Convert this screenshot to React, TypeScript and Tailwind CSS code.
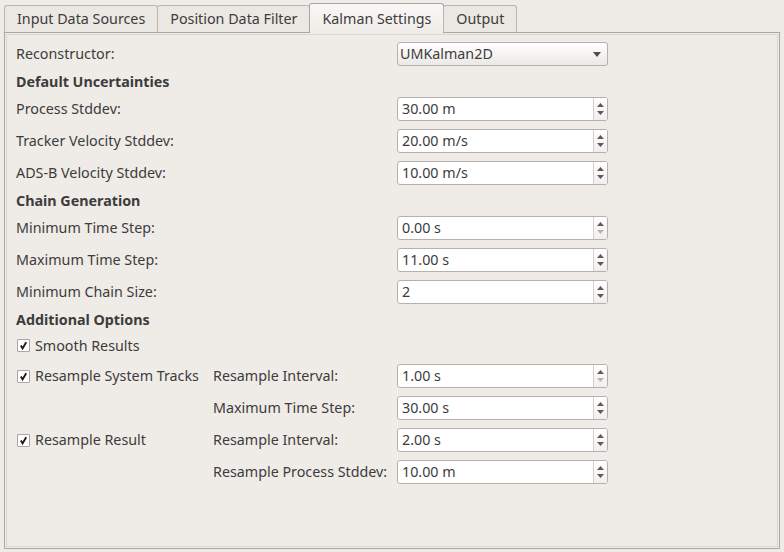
import React from 'react';

const font = { fontFamily: '"Noto Sans", "Open Sans", sans-serif' };

function Arrow({ dir, dim }: { dir: 'up' | 'down'; dim?: boolean }) {
  return (
    <svg width="7" height="4" viewBox="0 0 7 4" className="block">
      {dir === 'up' ? (
        <polygon points="0,4 3.5,0 7,4" fill={dim ? '#b8b4b0' : '#5d5a57'} />
      ) : (
        <polygon points="0,0 3.5,4 7,0" fill={dim ? '#b8b4b0' : '#5d5a57'} />
      )}
    </svg>
  );
}

function SpinBox({ value, downDim }: { value: string; downDim?: boolean }) {
  return (
    <div className="w-[211px] h-[24px] flex bg-white border border-[#b6b1ac] rounded-[3px] overflow-hidden">
      <div className="flex-1 flex items-center pl-[4px] text-[#3c3c3c]">{value}</div>
      <div className="w-[14px] border-l border-[#d4d0cc] bg-gradient-to-b from-white to-[#f1efed] flex flex-col items-center justify-center gap-[4px]">
        <Arrow dir="up" />
        <Arrow dir="down" dim={downDim} />
      </div>
    </div>
  );
}

function Combo({ value }: { value: string }) {
  return (
    <div className="w-[211px] h-[24px] flex items-center justify-between bg-gradient-to-b from-white to-[#ebe9e6] border border-[#b6b1ac] rounded-[3px] pl-[2px] pr-[6px] text-[#3c3c3c]">
      <span>{value}</span>
      <svg width="8" height="5" viewBox="0 0 8 5">
        <polygon points="0,0 4,5 8,0" fill="#4e4b48" />
      </svg>
    </div>
  );
}

function Row({ label, children }: { label: string; children: React.ReactNode }) {
  return (
    <div className="h-[32px] flex items-center">
      <div className="w-[381px]">{label}</div>
      {children}
    </div>
  );
}

function Header({ text }: { text: string }) {
  return <div className="h-[23px] flex items-center font-bold">{text}</div>;
}

function Check({ label }: { label: string }) {
  return (
    <div className="flex items-center">
      <div className="w-[13px] h-[13px] ml-[1px] mr-[5px] bg-white border border-[#a9a5a1] rounded-[1px] flex items-center justify-center">
        <svg width="9" height="9" viewBox="0 0 9 9">
          <path d="M1.8 4.6 L3.6 7.4 L7.2 1.2" stroke="#1e1c1a" strokeWidth="1.9" fill="none" />
        </svg>
      </div>
      <span>{label}</span>
    </div>
  );
}

export default function App() {
  const tabs = ['Input Data Sources', 'Position Data Filter', 'Kalman Settings', 'Output'];
  return (
    <div className="w-[784px] h-[552px] bg-[#efebe7] text-[14.3px] text-[#3c3c3c] flex flex-col px-[4px] pb-[3px]" style={font}>
      {/* tabs */}
      <div className="flex items-end h-[32px] pt-[3px] relative z-10">
        {tabs.map((t, i) =>
          i === 2 ? (
            <div
              key={t}
              className="h-[30px] px-[12px] flex items-center border border-b-0 border-[#aaa6a1] rounded-t-[3px] bg-gradient-to-b from-[#f9f8f7] to-[#efebe7] -mb-px -ml-px"
            >
              {t}
            </div>
          ) : (
            <div
              key={t}
              className={`h-[27px] px-[12px] flex items-center border border-b-0 border-[#b9b5b0] rounded-t-[3px] bg-[#ebe7e3] ${i > 0 ? '-ml-px' : ''}`}
            >
              {t}
            </div>
          )
        )}
      </div>
      {/* panel */}
      <div className="flex-1 border border-[#aaa6a1] p-px">
        <div className="h-full border border-[#dcd8d3] px-[9px] pt-[3px]">
          <Row label="Reconstructor:">
            <Combo value="UMKalman2D" />
          </Row>
          <Header text="Default Uncertainties" />
          <Row label="Process Stddev:">
            <SpinBox value="30.00 m" />
          </Row>
          <Row label="Tracker Velocity Stddev:">
            <SpinBox value="20.00 m/s" />
          </Row>
          <Row label="ADS-B Velocity Stddev:">
            <SpinBox value="10.00 m/s" />
          </Row>
          <Header text="Chain Generation" />
          <Row label="Minimum Time Step:">
            <SpinBox value="0.00 s" downDim />
          </Row>
          <Row label="Maximum Time Step:">
            <SpinBox value="11.00 s" />
          </Row>
          <Row label="Minimum Chain Size:">
            <SpinBox value="2" />
          </Row>
          <Header text="Additional Options" />
          <div className="h-[29px] flex items-center">
            <Check label="Smooth Results" />
          </div>
          <div className="grid grid-cols-[197px_184px_211px] auto-rows-[32px] items-center">
            <Check label="Resample System Tracks" />
            <div>Resample Interval:</div>
            <SpinBox value="1.00 s" downDim />
            <div />
            <div>Maximum Time Step:</div>
            <SpinBox value="30.00 s" />
            <Check label="Resample Result" />
            <div>Resample Interval:</div>
            <SpinBox value="2.00 s" />
            <div />
            <div>Resample Process Stddev:</div>
            <SpinBox value="10.00 m" />
          </div>
        </div>
      </div>
    </div>
  );
}
